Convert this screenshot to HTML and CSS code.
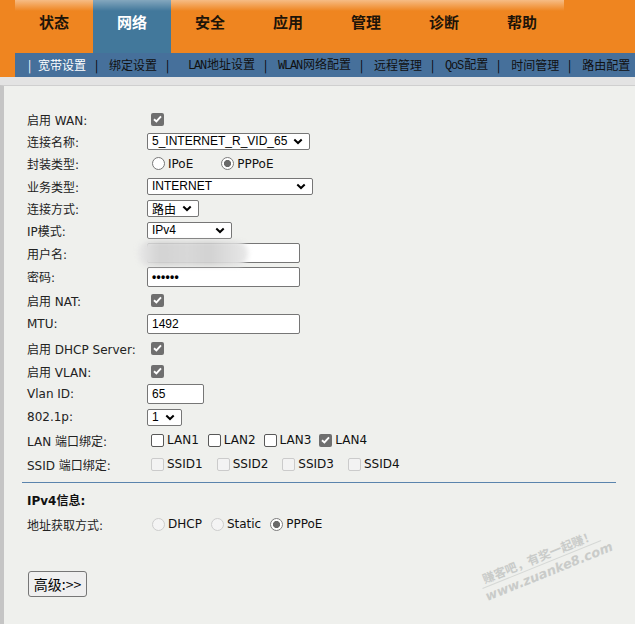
FILE: index.html
```html
<!DOCTYPE html>
<html lang="zh-CN">
<head>
<meta charset="utf-8">
<title>宽带设置</title>
<link rel="stylesheet" href="styles.css">
</head>
<body>
<div class="masthead">
  <ul class="mainnav">
    <li>状态</li>
    <li class="on">网络</li>
    <li>安全</li>
    <li>应用</li>
    <li>管理</li>
    <li>诊断</li>
    <li>帮助</li>
  </ul>
  <div class="subnav">
    <span class="sep on">|</span><span class="item first on">宽带设置</span>
    <span class="sep">|</span><span class="item">绑定设置</span>
    <span class="sep">|</span><span class="item lead"><span class="en">LAN</span>地址设置</span>
    <span class="sep">|</span><span class="item"><span class="en">WLAN</span>网络配置</span>
    <span class="sep">|</span><span class="item">远程管理</span>
    <span class="sep">|</span><span class="item"><span class="en">QoS</span>配置</span>
    <span class="sep">|</span><span class="item">时间管理</span>
    <span class="sep">|</span><span class="item">路由配置</span>
  </div>
</div>

<div class="panel">
  <div class="form">
    <div class="row"><span class="lbl">启用 WAN:</span><div class="ctl"><span class="cb on"><svg width="9" height="8" viewBox="0 0 9 8"><path d="M1 4.2 L3.4 6.5 L8 1.3" fill="none" stroke="#fff" stroke-width="1.9"/></svg></span></div></div>
    <div class="row"><span class="lbl">连接名称:</span><div class="ctl"><span class="sel w163">5_INTERNET_R_VID_65<svg class="chev" width="10" height="7" viewBox="0 0 10 7"><path d="M1.3 1.5 L5 5 L8.7 1.5" fill="none" stroke="#000" stroke-width="2"/></svg></span></div></div>
    <div class="row m"><span class="lbl">封装类型:</span><div class="ctl">
      <span class="opt r1"><span class="rd"></span>IPoE</span>
      <span class="opt"><span class="rd on"></span>PPPoE</span>
    </div></div>
    <div class="row"><span class="lbl">业务类型:</span><div class="ctl"><span class="sel w166">INTERNET<svg class="chev" width="10" height="7" viewBox="0 0 10 7"><path d="M1.3 1.5 L5 5 L8.7 1.5" fill="none" stroke="#000" stroke-width="2"/></svg></span></div></div>
    <div class="row"><span class="lbl">连接方式:</span><div class="ctl"><span class="sel w52">路由<svg class="chev" width="10" height="7" viewBox="0 0 10 7"><path d="M1.3 1.5 L5 5 L8.7 1.5" fill="none" stroke="#000" stroke-width="2"/></svg></span></div></div>
    <div class="row"><span class="lbl">IP模式:</span><div class="ctl"><span class="sel w85">IPv4<svg class="chev" width="10" height="7" viewBox="0 0 10 7"><path d="M1.3 1.5 L5 5 L8.7 1.5" fill="none" stroke="#000" stroke-width="2"/></svg></span></div></div>
    <div class="row t"><span class="lbl">用户名:</span><div class="ctl"><span class="fieldwrap"><span class="txt"></span><span class="blur"></span></span></div></div>
    <div class="row m"><span class="lbl">密码:</span><div class="ctl"><span class="txt pw">••••••</span></div></div>
    <div class="row t"><span class="lbl">启用 NAT:</span><div class="ctl"><span class="cb on"><svg width="9" height="8" viewBox="0 0 9 8"><path d="M1 4.2 L3.4 6.5 L8 1.3" fill="none" stroke="#fff" stroke-width="1.9"/></svg></span></div></div>
    <div class="row t"><span class="lbl">MTU:</span><div class="ctl"><span class="txt">1492</span></div></div>
    <div class="row t"><span class="lbl">启用 DHCP Server:</span><div class="ctl"><span class="cb on"><svg width="9" height="8" viewBox="0 0 9 8"><path d="M1 4.2 L3.4 6.5 L8 1.3" fill="none" stroke="#fff" stroke-width="1.9"/></svg></span></div></div>
    <div class="row"><span class="lbl">启用 VLAN:</span><div class="ctl"><span class="cb on"><svg width="9" height="8" viewBox="0 0 9 8"><path d="M1 4.2 L3.4 6.5 L8 1.3" fill="none" stroke="#fff" stroke-width="1.9"/></svg></span></div></div>
    <div class="row t"><span class="lbl">Vlan ID:</span><div class="ctl"><span class="txt short">65</span></div></div>
    <div class="row"><span class="lbl">802.1p:</span><div class="ctl"><span class="sel w35">1<svg class="chev" width="10" height="7" viewBox="0 0 10 7"><path d="M1.3 1.5 L5 5 L8.7 1.5" fill="none" stroke="#000" stroke-width="2"/></svg></span></div></div>
    <div class="row t"><span class="lbl">LAN 端口绑定:</span><div class="ctl">
      <span class="opt lan"><span class="cb off"></span>LAN1</span>
      <span class="opt lan"><span class="cb off"></span>LAN2</span>
      <span class="opt lan"><span class="cb off"></span>LAN3</span>
      <span class="opt lan"><span class="cb on"><svg width="9" height="8" viewBox="0 0 9 8"><path d="M1 4.2 L3.4 6.5 L8 1.3" fill="none" stroke="#fff" stroke-width="1.9"/></svg></span>LAN4</span>
    </div></div>
    <div class="row t"><span class="lbl">SSID 端口绑定:</span><div class="ctl">
      <span class="opt ssid"><span class="cb dis"></span>SSID1</span>
      <span class="opt ssid"><span class="cb dis"></span>SSID2</span>
      <span class="opt ssid"><span class="cb dis"></span>SSID3</span>
      <span class="opt ssid"><span class="cb dis"></span>SSID4</span>
    </div></div>
  </div>

  <div class="divider"></div>

  <div class="form">
    <div class="title">IPv4信息:</div>
    <div class="row t"><span class="lbl">地址获取方式:</span><div class="ctl">
      <span class="opt r2"><span class="rd dis"></span>DHCP</span>
      <span class="opt r2"><span class="rd dis"></span>Static</span>
      <span class="opt r2"><span class="rd on"></span>PPPoE</span>
    </div></div>
  </div>

  <button class="adv" type="button">高级:&gt;&gt;</button>

  <div class="watermark">
    <div class="wm1">赚客吧，有奖一起赚！</div>
    <div class="wm2">www.zuanke8.com</div>
  </div>
</div>
</body>
</html>
```

FILE: styles.css
```css
html, body {
  margin: 0;
  padding: 0;
}

body {
  background: #e3e3e3;
  font-family: "DejaVu Sans", "Noto Sans CJK SC", sans-serif;
  font-size: 12px;
  color: #222;
  overflow: hidden;
}

/* ---------- header ---------- */
.masthead {
  background: #ef8520;
  padding-left: 15px;
}

.mainnav {
  display: flex;
  width: 549px;
  height: 53px;
  margin: 0;
  padding: 0;
  list-style: none;
  background: linear-gradient(rgba(255, 255, 255, 0.45), rgba(255, 255, 255, 0) 11px);
}

.mainnav li {
  width: 78px;
  text-align: center;
  line-height: 44px;
  font-family: "Noto Sans CJK SC", sans-serif;
  font-weight: bold;
  font-size: 15px;
  color: #1e1408;
}

.mainnav li.on {
  background: linear-gradient(rgba(255, 255, 255, 0.35), rgba(255, 255, 255, 0) 11px), #42789b;
  color: #fff;
}

.subnav {
  display: flex;
  align-items: center;
  height: 24px;
  padding-left: 14px;
  padding-bottom: 2px;
  box-sizing: border-box;
  background: #46709b;
  font-family: "Noto Sans CJK SC", sans-serif;
  font-size: 12px;
  color: #111;
  white-space: nowrap;
  overflow: hidden;
}

.subnav .sep {
  display: flex;
  justify-content: center;
  width: 1px;
  color: #000;
}

.subnav .sep.on,
.subnav .item.on {
  color: #fff;
}

.subnav .item {
  padding: 0 10px 0 12px;
}

.subnav .item.first {
  padding-left: 8px;
}

.subnav .item.lead {
  padding-left: 20px;
}

.subnav .en {
  font-family: "Liberation Mono", monospace;
  font-size: 12px;
  letter-spacing: -1.2px;
  margin-right: 1px;
}

/* ---------- panel ---------- */
.panel {
  position: relative;
  margin-top: 8px;
  min-height: 560px;
  background: #eff0ed;
  border-top: 1px solid #cfcfcf;
  border-left: 4px solid #c5c5c5;
}

.form {
  margin-left: 23px;
}

.form:first-child {
  padding-top: 22px;
}

.row {
  display: flex;
  align-items: center;
  height: 22px;
}

.row.m {
  height: 23px;
}

.row.t {
  height: 24px;
}

.lbl {
  width: 120px;
  flex: none;
  white-space: nowrap;
  color: #222;
}

.ctl {
  display: flex;
  align-items: center;
}

/* select look-alike */
.sel {
  display: flex;
  align-items: center;
  justify-content: space-between;
  height: 17px;
  box-sizing: border-box;
  padding: 0 6px 0 4px;
  background: #fff;
  border: 1px solid #767676;
  border-radius: 2px;
  font-family: "Liberation Sans", "Noto Sans CJK SC", sans-serif;
  font-size: 12px;
  color: #000;
  white-space: nowrap;
}

.w163 { width: 163px; }
.w166 { width: 166px; }
.w52 { width: 52px; }
.w85 { width: 85px; }
.w35 { width: 35px; }

.chev {
  flex: none;
  margin-left: 6px;
}

/* text input look-alike */
.txt {
  display: flex;
  align-items: center;
  width: 153px;
  height: 20px;
  box-sizing: border-box;
  padding-left: 4px;
  background: #fff;
  border: 1px solid #767676;
  border-radius: 2px;
  font-family: "Liberation Sans", sans-serif;
  font-size: 12px;
  color: #000;
}

.txt.short {
  width: 57px;
}

.txt.pw {
  font-weight: bold;
  letter-spacing: 0.3px;
}

.fieldwrap {
  position: relative;
  display: flex;
}

.blur {
  position: absolute;
  left: -9px;
  top: -2px;
  width: 110px;
  height: 25px;
  border-radius: 12px;
  background: linear-gradient(90deg, #e8e8e8 0%, #d3d3d3 20%, #d8d8d8 45%, #d2d2d2 65%, #e8e8e8 100%);
  filter: blur(2.5px);
}

/* checkbox */
.cb {
  display: flex;
  align-items: center;
  justify-content: center;
  flex: none;
  width: 13px;
  height: 13px;
  box-sizing: border-box;
  border-radius: 2px;
  margin-left: 4px;
}

.cb.on {
  background: #6f6f6f;
}

.cb.off {
  background: #fff;
  border: 1px solid #585858;
}

.cb.dis {
  background: #f3f3f3;
  border: 1px solid #cbcbcb;
}

.opt {
  display: flex;
  align-items: center;
  color: #111;
  white-space: nowrap;
}

.opt .cb {
  margin-right: 3px;
}

.opt.lan {
  margin-right: 8px;
}

.opt.lan + .opt.lan .cb,
.opt.ssid + .opt.ssid .cb {
  margin-left: 0;
}

.opt.lan:first-child {
  margin-right: 9px;
}

.opt.ssid {
  margin-right: 14px;
}

/* radio */
.rd {
  flex: none;
  width: 13px;
  height: 13px;
  box-sizing: border-box;
  margin: 0 3px 0 5px;
  border-radius: 50%;
  background: #fff;
  border: 1px solid #777;
}

.rd.on {
  border: 1px solid #7d7d7d;
  background: radial-gradient(circle, #6a6a6a 0, #6a6a6a 3.2px, #fff 3.9px);
}

.rd.dis {
  background: #f4f4f4;
  border: 1px solid #cdcdcd;
}

.opt.r1 {
  margin-right: 23px;
}

.opt.r2 {
  margin-right: 4px;
}

/* divider and section */
.divider {
  height: 1px;
  margin: 6px 19px 0 18px;
  background: #5a84ad;
}

.title {
  height: 22px;
  margin-top: 7px;
  line-height: 22px;
  font-weight: bold;
  color: #111;
}

.adv {
  display: block;
  width: 59px;
  height: 26px;
  margin: 35px 0 0 24px;
  padding: 0;
  background: #efefef;
  border: 1px solid #767676;
  border-radius: 3px;
  font-family: "Noto Sans CJK SC", sans-serif;
  font-size: 14px;
  color: #000;
}

/* watermark overlay */
.watermark {
  position: absolute;
  left: 474px;
  top: 462px;
  width: 128px;
  transform: rotate(-22deg);
  text-align: center;
  color: #c9cbc9;
  font-weight: bold;
}

.wm1 {
  font-family: "Noto Sans CJK SC", sans-serif;
  font-size: 12px;
  line-height: 15px;
  border-bottom: 1px solid #d6d8d6;
  padding-bottom: 1px;
}

.wm2 {
  font-family: "DejaVu Sans", sans-serif;
  font-style: italic;
  font-size: 13px;
  line-height: 17px;
}
```
